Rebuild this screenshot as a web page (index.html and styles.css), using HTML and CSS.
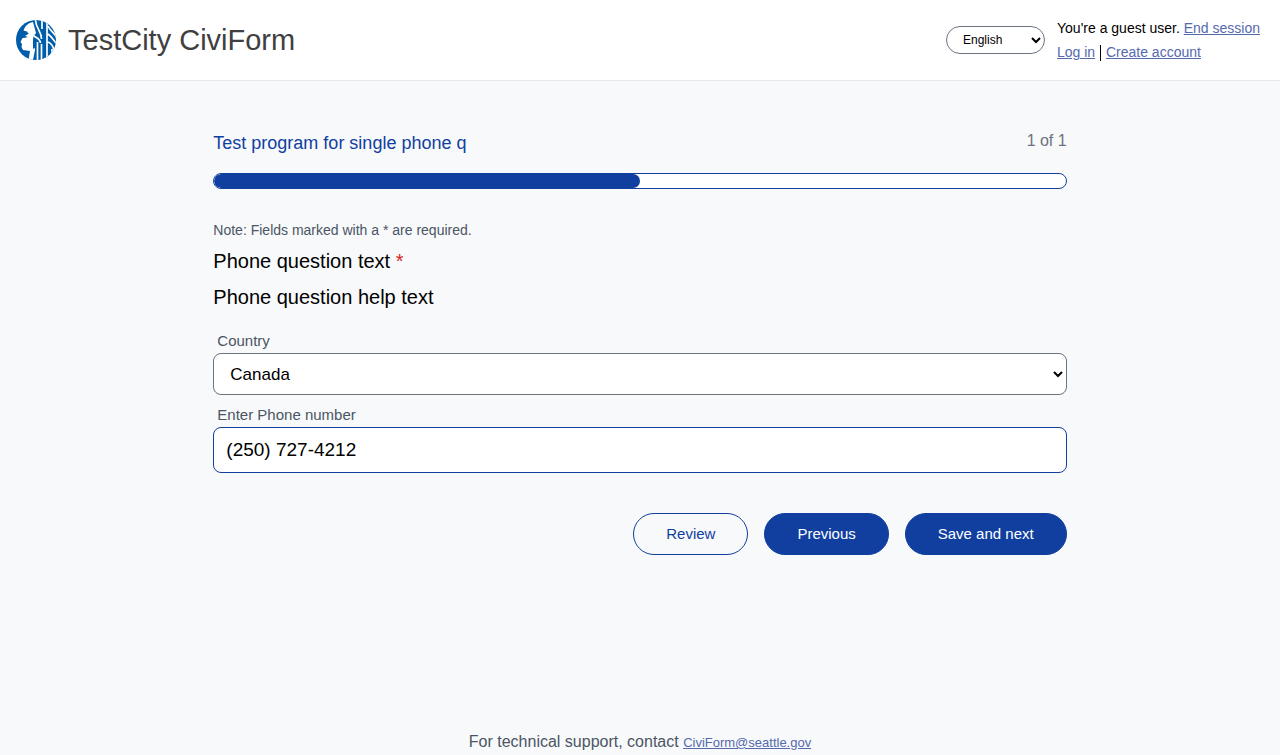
FILE: index.html
```
<!DOCTYPE html>
<html lang="en">
<head>
<meta charset="utf-8">
<meta name="viewport" content="width=device-width, initial-scale=1">
<title>Phone question text</title>
<link rel="stylesheet" href="styles.css">
</head>
<body class="page">
<header class="header">
  <a class="brand" href="#">
    <svg class="logo" viewBox="0 0 40 40" aria-hidden="true">
      <defs><clipPath id="seal"><circle cx="20" cy="20" r="20"/></clipPath></defs>
      <g clip-path="url(#seal)">
        <rect width="40" height="40" fill="#005daa"/>
        <path fill="#fff" d="M17 2 C12 3 9 6 7.500 10.500 L12 12 L8 14 L7 17 L4.500 22 L6 24 L5.500 27 L7 30 L14 31 L12.500 40 L17 40 L19 30 L18 20 L17 17 L20 13 Z"/>
        <path fill="#005daa" d="M5 12 L9 11 L13 13.500 L9 16 L12 17 L8 18 L5 18 Z M17 18 L21 21 L20 27 L17 29 Z"/>
        <path fill="none" stroke="#fff" stroke-width="1.7" d="M19.500 0 C20 9 25.500 11 25.500 19 M26 0 V9 M31 0 V40 M21.500 22 V40 M25.500 24 V40 M16.500 15 C20 18 24 18 24.500 23 M32 6 C34 11 38 12 41 18 M32 14 C36 17 37 20 41 24 M32 22 C35 23 37 26 38 30 M36 29 V40"/>
      </g>
    </svg>
    <span class="brand-name">TestCity CiviForm</span>
  </a>
  <div class="account">
    <select class="language" aria-label="Language"><option>English</option></select>
    <div class="session">
      <div>You're a guest user. <a class="link" href="#">End session</a></div>
      <div><a class="link" href="#">Log in</a> <span class="divider"></span> <a class="link" href="#">Create account</a></div>
    </div>
  </div>
</header>
<main class="content">
  <div class="heading">
    <h1 class="program">Test program for single phone q</h1>
    <span class="step">1 of 1</span>
  </div>
  <div class="progress"><div class="progress-fill" style="width: 50%"></div></div>
  <form class="form">
    <p class="note">Note: Fields marked with a * are required.</p>
    <h2 class="question">Phone question text <span class="required">*</span></h2>
    <p class="question">Phone question help text</p>
    <label class="label label-first" for="country">Country</label>
    <select class="field country" id="country"><option>Canada</option></select>
    <label class="label" for="phone">Enter Phone number</label>
    <input class="field phone" id="phone" type="tel" value="(250) 727-4212">
    <div class="actions">
      <button class="button button-outline" type="button">Review</button>
      <button class="button" type="button">Previous</button>
      <button class="button" type="button">Save and next</button>
    </div>
  </form>
</main>
<footer class="footer">For technical support, contact <a class="link support" href="#">CiviForm@seattle.gov</a></footer>
</body>
</html>
```
FILE: styles.css
```
* {
  box-sizing: border-box;
}

.page {
  display: flex;
  flex-direction: column;
  min-height: 100vh;
  margin: 0;
  background: #f8f9fb;
  color: #000;
  font-family: "Liberation Sans", Arial, sans-serif;
  font-size: 16px;
  line-height: 24px;
}

.header {
  display: flex;
  align-items: center;
  justify-content: space-between;
  padding: 16px 20px 16px 16px;
  background: #fff;
  border-bottom: 1px solid #e5e7eb;
}

.brand {
  display: flex;
  align-items: center;
  gap: 12px;
  color: #404040;
  text-decoration: none;
}

.logo {
  width: 40px;
  height: 40px;
}

.brand-name {
  font-size: 29px;
  line-height: 36px;
}

.account {
  display: flex;
  align-items: center;
  gap: 12px;
}

.language {
  width: 99px;
  height: 28px;
  padding: 0 0 0 12px;
  border: 1px solid #6b7280;
  border-radius: 14px;
  background: #fff;
  color: #000;
  font-family: inherit;
  font-size: 12px;
}

.session {
  font-size: 14px;
}

.link {
  color: #5569ad;
  font-size: 14px;
}

.divider {
  display: inline-block;
  height: 16px;
  margin: 0 1px;
  border-left: 1px solid #000;
  vertical-align: middle;
}

.content {
  flex: 1;
  width: calc(100% * 2 / 3);
  margin: 0 auto;
  padding-top: 48px;
}

.heading {
  display: flex;
  justify-content: space-between;
}

.program {
  margin: 0;
  color: #113f9f;
  font-size: 18px;
  font-weight: 400;
  line-height: 28px;
}

.step {
  color: #6b7280;
}

.progress {
  height: 16px;
  margin-top: 16px;
  border: 1px solid #113f9f;
  border-radius: 8px;
  background: #fff;
  overflow: hidden;
}

.progress-fill {
  height: 100%;
  border-radius: 8px;
  background: #113f9f;
}

.form {
  padding-top: 32px;
}

.note {
  margin: 0;
  color: #4b5563;
  font-size: 14px;
  line-height: 18px;
}

.question {
  margin: 8px 0 0;
  font-size: 20px;
  font-weight: 400;
  line-height: 28px;
}

.required {
  color: #dc2626;
}

.label {
  display: block;
  padding: 8px 4px 0;
  color: #4b5563;
  font-size: 15px;
}

.label-first {
  padding-top: 18px;
}

.field {
  display: block;
  width: 100%;
  border: 1px solid #6b7280;
  border-radius: 8px;
  background: #fff;
  color: #000;
  font-family: inherit;
  font-size: 18px;
}

.country {
  height: 42px;
  padding: 0 0 0 12px;
  font-size: 17px;
}

.phone {
  height: 46px;
  padding: 0 12px;
  border-color: #113f9f;
  font-size: 19px;
}

.actions {
  display: flex;
  justify-content: flex-end;
  gap: 16px;
  padding-top: 40px;
}

.button {
  padding: 8px 32px;
  border: 1px solid #113f9f;
  border-radius: 24px;
  background: #113f9f;
  color: #fff;
  font-family: inherit;
  font-size: 15px;
  line-height: 24px;
}

.button-outline {
  background: transparent;
  color: #113f9f;
}

.footer {
  color: #4b5563;
  text-align: center;
}

.support {
  font-size: 13px;
}
```
